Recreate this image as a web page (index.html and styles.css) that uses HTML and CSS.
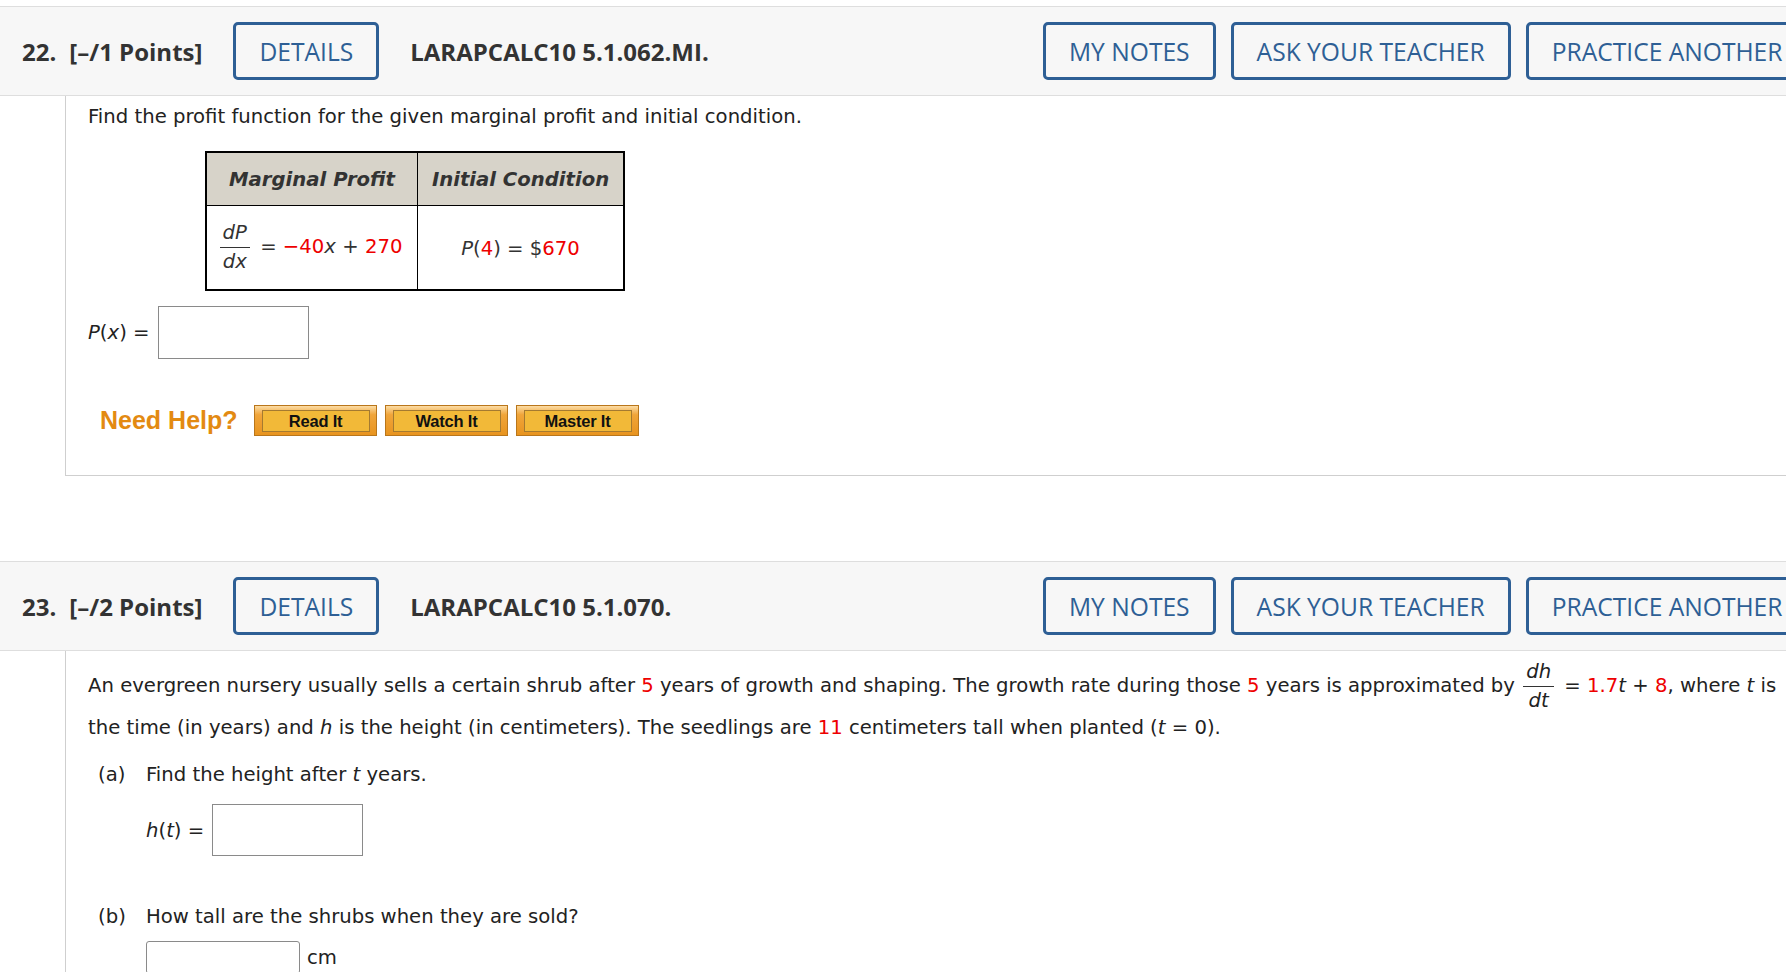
FILE: index.html
```html
<!DOCTYPE html>
<html lang="en">
<head>
<meta charset="utf-8">
<title>Questions</title>
<link rel="stylesheet" href="styles.css">
</head>
<body>
<div class="page">

  <section class="question">
    <div class="qhead">
      <div class="qleft">
        <span class="qnum">22.</span>
        <span class="qpts">[–/1 Points]</span>
        <button class="obtn details">DETAILS</button>
        <span class="qcode">LARAPCALC10 5.1.062.MI.</span>
      </div>
      <div class="qright">
        <button class="obtn">MY NOTES</button>
        <button class="obtn">ASK YOUR TEACHER</button>
        <button class="obtn">PRACTICE ANOTHER</button>
      </div>
    </div>
    <div class="qbody q22body">
      <p class="prompt">Find the profit function for the given marginal profit and initial condition.</p>
      <table class="mtable">
        <tr>
          <th class="c1">Marginal Profit</th>
          <th class="c2">Initial Condition</th>
        </tr>
        <tr>
          <td class="c1"><span class="frac"><span class="num"><i>dP</i></span><span class="den"><i>dx</i></span></span> = <span class="red">−40</span><i>x</i> + <span class="red">270</span></td>
          <td class="c2"><i>P</i>(<span class="red">4</span>) = $<span class="red">670</span></td>
        </tr>
      </table>
      <div class="answer-row px-row">
        <span class="alabel"><i>P</i>(<i>x</i>) =</span>
        <span class="abox"></span>
      </div>
      <div class="help-row">
        <span class="need">Need Help?</span>
        <button class="hbtn"><span>Read It</span></button>
        <button class="hbtn"><span>Watch It</span></button>
        <button class="hbtn"><span>Master It</span></button>
      </div>
    </div>
  </section>

  <section class="question q23">
    <div class="qhead">
      <div class="qleft">
        <span class="qnum">23.</span>
        <span class="qpts">[–/2 Points]</span>
        <button class="obtn details">DETAILS</button>
        <span class="qcode">LARAPCALC10 5.1.070.</span>
      </div>
      <div class="qright">
        <button class="obtn">MY NOTES</button>
        <button class="obtn">ASK YOUR TEACHER</button>
        <button class="obtn">PRACTICE ANOTHER</button>
      </div>
    </div>
    <div class="qbody q23body">
      <p class="story">An evergreen nursery usually sells a certain shrub after <span class="red">5</span> years of growth and shaping. The growth rate during those <span class="red">5</span> years is approximated by <span class="frac"><span class="num"><i>dh</i></span><span class="den"><i>dt</i></span></span> = <span class="red">1.7</span><i>t</i> + <span class="red">8</span>, where <i>t</i> is<br>the time (in years) and <i>h</i> is the height (in centimeters). The seedlings are <span class="red">11</span> centimeters tall when planted (<i>t</i> = 0).</p>
      <div class="part part-a">
        <div class="pline"><span class="plabel">(a)</span><span>Find the height after <i>t</i> years.</span></div>
        <div class="answer-row ht-row">
          <span class="alabel"><i>h</i>(<i>t</i>) =</span>
          <span class="abox"></span>
        </div>
      </div>
      <div class="part part-b">
        <div class="pline"><span class="plabel">(b)</span><span>How tall are the shrubs when they are sold?</span></div>
        <div class="answer-row cm-row">
          <span class="abox small"></span>
          <span class="unit">cm</span>
        </div>
      </div>
    </div>
  </section>

</div>
</body>
</html>
```

FILE: styles.css
```css
html, body {
  margin: 0;
  padding: 0;
  overflow: hidden;
  background: #fff;
}

.page {
  padding-top: 6px;
  width: 1786px;
  font-family: "DejaVu Sans", Verdana, sans-serif;
  font-size: 19.65px;
  color: #222;
}

/* ---------- question header ---------- */
.qhead {
  display: flex;
  align-items: center;
  height: 88px;
  padding-left: 22px;
  background: #f7f7f7;
  border-top: 1px solid #dedede;
  border-bottom: 1px solid #dedede;
  overflow: hidden;
  white-space: nowrap;
  font-family: "Open Sans", sans-serif;
  font-size: 24px;
}

.qleft {
  flex: 0 0 1021px;
  display: flex;
  align-items: center;
}

.qright {
  flex: 0 0 auto;
  display: flex;
  align-items: center;
  gap: 15px;
}

.qnum {
  font-weight: 700;
  color: #333;
  margin-right: 13px;
}

.qpts {
  font-weight: 700;
  color: #333;
  margin-right: 31px;
}

.qcode {
  font-weight: 700;
  color: #333;
  margin-left: 31px;
}

.obtn {
  height: 58px;
  padding: 0 23px;
  border: 3px solid #2e5f95;
  border-radius: 5px;
  background: #f7f7f7;
  color: #2e5f95;
  font-family: "Open Sans", sans-serif;
  font-size: 24.6px;
  font-weight: 400;
  white-space: nowrap;
  flex: 0 0 auto;
}

/* ---------- question body ---------- */
.qbody {
  margin-left: 65px;
  border-left: 1px solid #cfcfcf;
  padding-left: 22px;
}

.q22body {
  border-bottom: 1px solid #cfcfcf;
  padding-top: 7px;
  padding-bottom: 39px;
}

.prompt {
  margin: 0;
  line-height: 28px;
}

.red {
  color: #ee0000;
}

/* table */
.mtable {
  margin: 20px 0 0 117px;
  border: 2px solid #000;
  border-collapse: separate;
  border-spacing: 0;
  color: #333;
}

.mtable th {
  height: 52px;
  padding: 0;
  background: #d7d3c9;
  font-weight: 700;
  font-style: italic;
  border-bottom: 1px solid #000;
  text-align: center;
}

.mtable td {
  height: 81px;
  padding: 0;
  text-align: center;
  white-space: nowrap;
}

.mtable .c1 {
  width: 210px;
  border-right: 1px solid #000;
}

.mtable .c2 {
  width: 205px;
}

.mtable td.c1 {
  padding-left: 4px;
  padding-right: 8px;
  width: 198px;
}

.mtable td.c2 {
  padding-top: 2px;
}

/* fractions */
.frac {
  display: inline-flex;
  flex-direction: column;
  align-items: center;
  vertical-align: middle;
  margin: -12px 4px -12px 2px;
  line-height: 26px;
}

.frac .num {
  border-bottom: 1px solid #333;
  padding: 0 3px 1px;
}

.frac .den {
  padding: 1px 3px 0;
}

/* answer rows */
.answer-row {
  display: flex;
  align-items: center;
}

.alabel {
  margin-right: 8px;
}

.abox {
  display: block;
  width: 149px;
  height: 51px;
  border: 1px solid #8a8a8a;
  background: #fff;
}

.px-row {
  margin-top: 15px;
}

/* need help */
.help-row {
  display: flex;
  align-items: center;
  gap: 8px;
  margin-top: 46px;
  padding-left: 12px;
}

.need {
  font-family: "Liberation Sans", Arial, sans-serif;
  font-weight: 700;
  font-size: 25px;
  color: #e38a12;
  margin-right: 8px;
}

.hbtn {
  width: 123px;
  height: 31px;
  padding: 4px 6px 3px 7px;
  border: 1px solid #b9761b;
  background: linear-gradient(#fcdca4 0%, #f0a53a 30%, #e8941f 100%);
  display: flex;
  align-items: stretch;
}

.hbtn span {
  flex: 1;
  display: flex;
  align-items: center;
  justify-content: center;
  border: 1px solid #a57a30;
  background: #f2b938;
  font-family: "Liberation Sans", Arial, sans-serif;
  font-weight: 700;
  font-size: 16.5px;
  color: #111;
  letter-spacing: -0.2px;
}

/* question 23 */
.q23 {
  margin-top: 85px;
}

.q23body {
  padding-top: 14px;
  padding-bottom: 60px;
}

.story {
  margin: 0;
  line-height: 42px;
  white-space: nowrap;
}

.part {
  padding-left: 10px;
}

.pline {
  display: flex;
  line-height: 28px;
}

.plabel {
  width: 48px;
  flex: 0 0 48px;
}

.part-a {
  margin-top: 12px;
}

.ht-row {
  margin-top: 15px;
  margin-left: 48px;
}

.ht-row .abox {
  height: 50px;
}

.part-b {
  margin-top: 47px;
}

.cm-row {
  margin-top: 10px;
  margin-left: 48px;
}

.abox.small {
  width: 152px;
  height: 31px;
  border-radius: 3px;
}

.unit {
  margin-left: 7px;
}
```
